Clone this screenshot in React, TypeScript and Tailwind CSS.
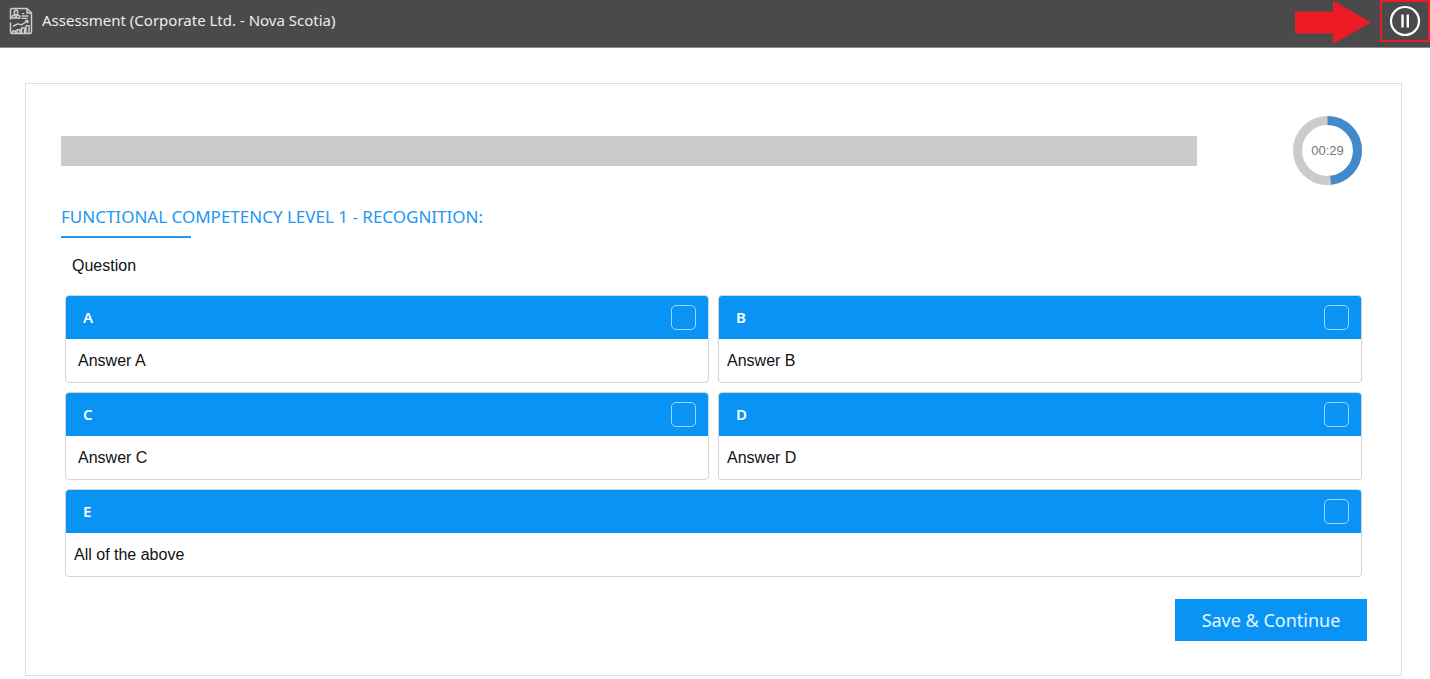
import React, { useState } from 'react';
import { clsx } from 'clsx';

interface Answer {
  id: string;
  text: string;
  wide?: boolean;
  indent?: boolean;
}

const answers: Answer[] = [
  { id: 'A', text: 'Answer A', indent: true },
  { id: 'B', text: 'Answer B' },
  { id: 'C', text: 'Answer C', indent: true },
  { id: 'D', text: 'Answer D' },
  { id: 'E', text: 'All of the above', wide: true },
];

const ReportIcon: React.FC = () => (
  <svg className="w-6 h-7 shrink-0 text-[#d0d0d0]" viewBox="0 0 24 28" fill="none" stroke="currentColor" strokeWidth="1.4" strokeLinecap="round" strokeLinejoin="round" aria-hidden="true">
    <path d="M1.5 12V3Q1.5 1.5 3 1.5H18L22.5 6V25Q22.5 26.5 21 26.5H3Q1.5 26.5 1.5 25V16" />
    <path d="M18 1.5V6H22.5" />
    <path d="M7 3.2Q9 3.4 8.8 5.6Q8.5 7.6 7 7.8Q5.5 7.6 5.2 5.6Q5 3.4 7 3.2Z" />
    <path d="M3 11V9.8Q3.2 8.4 5.2 8L7 9.8L8.8 8Q10.8 8.4 11 9.8V11Z" />
    <path d="M13.6 6.6H14.6M13.2 9H19M13.2 11.4H18" />
    <path d="M4.5 19L9 16.8L12.5 17.8L18.5 14M16.6 13.8H18.8V15.8" />
    <path d="M3.5 26V24H6.5V26M8 26V22.8H11V26M12.5 26V21H15.5V26M17 26V18.6H20V26" />
  </svg>
);

const Timer: React.FC<{ seconds: number }> = ({ seconds }) => (
  <div className="relative w-[69px] h-[69px] shrink-0 flex items-center justify-center" role="timer">
    <svg className="absolute inset-0 -rotate-90" viewBox="0 0 69 69" fill="none" strokeWidth="9" aria-hidden="true">
      <circle cx="34.5" cy="34.5" r="30" stroke="#cbcbcb" />
      <circle cx="34.5" cy="34.5" r="30" stroke="#428bca" pathLength={60} strokeDasharray={`${seconds} 60`} />
    </svg>
    <span className="relative text-[13px] text-[#777777] font-['Liberation_Sans',sans-serif]">
      00:{String(seconds).padStart(2, '0')}
    </span>
  </div>
);

const AnswerCard: React.FC<{ answer: Answer; checked: boolean; onToggle: () => void }> = ({ answer, checked, onToggle }) => (
  <label className={clsx('block rounded border border-[#d4d4d4] overflow-hidden cursor-pointer', answer.wide && 'col-span-2')}>
    <div className="flex items-center justify-between h-[43px] pl-[17px] pr-3 bg-[#0994f5]">
      <span className="text-[15px] font-semibold text-white">{answer.id}</span>
      <input
        type="checkbox"
        checked={checked}
        onChange={onToggle}
        className="appearance-none w-[25px] h-[25px] rounded-[5px] border border-white/60 checked:bg-white/80"
      />
    </div>
    <div
      className={clsx(
        "flex items-center h-[43px] text-base text-[#111111] font-['Liberation_Sans',sans-serif]",
        answer.indent ? 'px-3' : 'px-2'
      )}
    >
      {answer.text}
    </div>
  </label>
);

export default function App() {
  const [selected, setSelected] = useState<string[]>([]);

  const toggle = (id: string) => {
    setSelected((prev) => (prev.includes(id) ? prev.filter((x) => x !== id) : [...prev, id]));
  };

  return (
    <div className="bg-white font-['Noto_Sans',sans-serif]">
      {/* Top bar */}
      <header className="flex items-start justify-between h-12 pl-[9px] bg-[#4a4a4a] border-b border-[#8a8a8a]">
        <div className="flex items-center gap-[9px] pt-[7px]">
          <ReportIcon />
          <h1 className="pb-0.5 text-[15px] leading-6 text-[#ececec]">Assessment (Corporate Ltd. - Nova Scotia)</h1>
        </div>
        <div className="flex items-start gap-2">
          <svg className="w-[77px] h-11" viewBox="0 0 77 44" fill="#ed1c24" aria-hidden="true">
            <path d="M0 11.5H38V0.5L76 22.5L38 44V33.5H0Z" />
          </svg>
          <button type="button" aria-label="Pause" className="flex items-center justify-center w-[50px] h-[42px] border-2 border-[#ed1c24]">
            <svg className="w-8 h-8" viewBox="0 0 32 32" fill="none" stroke="#ffffff" aria-hidden="true">
              <circle cx="16" cy="16" r="14" strokeWidth="2.2" />
              <path d="M13.5 9.5V22.5M18.8 9.5V22.5" strokeWidth="2.4" />
            </svg>
          </button>
        </div>
      </header>

      <main className="ml-[25px] mr-7 mt-[35px] pl-[35px] pr-[34px] pt-8 pb-[34px] border border-[#dddddd]">
        <div className="flex items-center gap-24 pr-[5px]">
          <div className="flex-1 h-[30px] bg-[#cbcbcb]" />
          <Timer seconds={29} />
        </div>

        <h2 className="mt-5 text-[17px] leading-6 text-[#2196f3]">FUNCTIONAL COMPETENCY LEVEL 1 - RECOGNITION:</h2>
        <div className="mt-[7px] w-[130px] h-0.5 bg-[#2196f3]" />

        <form onSubmit={(e) => e.preventDefault()}>
          <p className="mt-4 ml-[11px] text-base text-[#111111] font-['Liberation_Sans',sans-serif]">Question</p>

          <div className="grid grid-cols-2 gap-[9px] mt-[17px] pl-1 pr-[5px]">
            {answers.map((answer) => (
              <AnswerCard
                key={answer.id}
                answer={answer}
                checked={selected.includes(answer.id)}
                onToggle={() => toggle(answer.id)}
              />
            ))}
          </div>

          <div className="flex justify-end mt-[22px]">
            <button type="submit" className="w-48 h-[42px] bg-[#0994f5] text-lg text-white/90">
              Save &amp; Continue
            </button>
          </div>
        </form>
      </main>
    </div>
  );
}
